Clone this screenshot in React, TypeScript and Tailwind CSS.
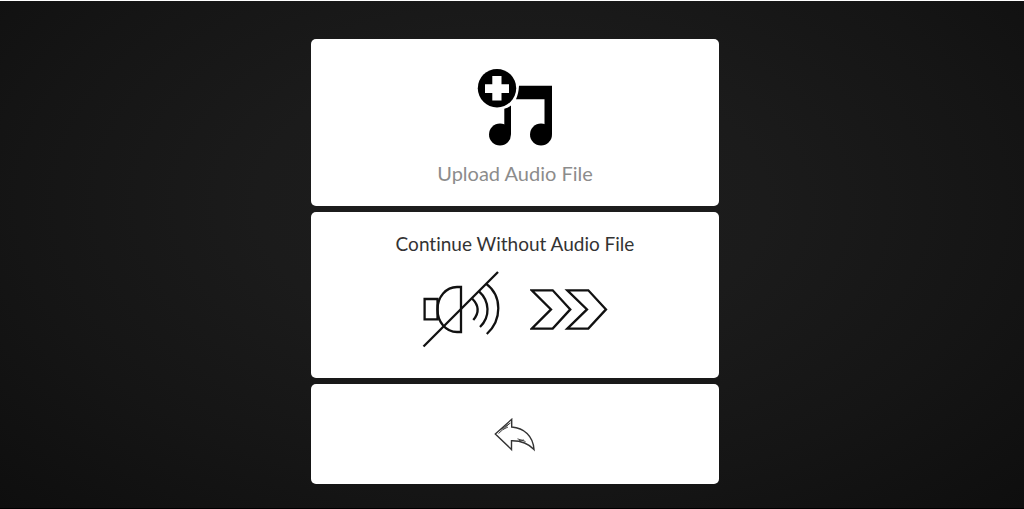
import React from 'react';

const cardStyle = 'flex w-full flex-col items-center rounded-[5px] bg-white cursor-pointer';

const AddMusicIcon = () => (
  <svg width="78" height="80" viewBox="476 68 78 80" aria-hidden="true">
    <path d="M519 85.8H552V134H544.5V99.3H516Q518.5 94 519 85.8Z" />
    <path d="M504.3 134V108.8Q508.5 107.8 511 105.5V134Z" />
    <circle cx="500" cy="134.5" r="11" />
    <circle cx="541" cy="134.5" r="11" />
    <circle cx="497" cy="88.2" r="19.2" />
    <path fill="#fff" d="M492.3 76H501.5V84.3H509V92.9H501.5V100.6H492.3V92.9H485V84.3H492.3Z" />
  </svg>
);

const MutedSpeakerIcon = () => (
  <svg width="78" height="78" viewBox="422 270 78 78" fill="none" stroke="#111" strokeWidth="2.3" aria-hidden="true">
    <path d="M437.5 299H424.6V319.3H437.5Z" />
    <path d="M461 287H457C446 287 437.5 297 437.5 309.5S446 332 457 332H461Z" />
    <path d="M423.5 346.5L498 272" />
    <path d="M472.3 298.7Q482.5 309 473.3 320" />
    <path d="M479 291.3C489.8 301 490.5 317 480 327" />
    <path d="M486 283.7C502.5 296 502 320 486.8 334" />
  </svg>
);

const SkipIcon = () => (
  <svg width="78" height="44" viewBox="530 287 78 44" fill="none" stroke="#111" strokeWidth="2.3" aria-hidden="true">
    <path d="M531.7 290.3H552.7L570.3 309.4L552.7 328.6H531.7L551 309.4Z" />
    <path d="M567.3 290.3H588.3L606 309.4L588.3 328.6H567.3L587 309.4Z" />
  </svg>
);

const BackIcon = () => (
  <svg width="42" height="34" viewBox="494 418 42 34" fill="none" stroke="#333" strokeWidth="1.4" aria-hidden="true">
    <path d="M495.3 434L511.7 419.3V427C524 428 533 436 534 449.5C528 443 521 440.5 511.5 440.7V449.5Z" />
    <path strokeWidth="0.9" d="M498.5 433.5L509.5 423.5M500 430L510.5 423M503 429.5L508 427M517.5 438.8L525.5 441.5M519 440.5L524 440" />
  </svg>
);

const App = () => {
  return (
    <main className="min-h-screen border-t border-t-white border-b border-b-black bg-[radial-gradient(ellipse_at_50%_40%,#1e1e1e_0%,#1b1b1b_35%,#151515_68%,#0e0e0e_100%)] pt-[38px] pb-6 pl-1.5 font-[Lato,sans-serif] leading-7 [font-variant-ligatures:none]">
      <div className="mx-auto flex w-full max-w-[408px] flex-col gap-1.5">
        <button type="button" className={`${cardStyle} gap-[11px] pt-[29px] pb-[19px] text-[20px] text-[#8c8c8c]`}>
          <AddMusicIcon />
          Upload Audio File
        </button>

        <button type="button" className={`${cardStyle} gap-3 pt-[18px] pb-[30px] text-[19px] text-[#333]`}>
          Continue Without Audio File
          <span className="flex items-center gap-[30px]">
            <MutedSpeakerIcon />
            <SkipIcon />
          </span>
        </button>

        <button type="button" aria-label="Back" className={`${cardStyle} pt-[34px] pb-8`}>
          <BackIcon />
        </button>
      </div>
    </main>
  );
};

export default App;
